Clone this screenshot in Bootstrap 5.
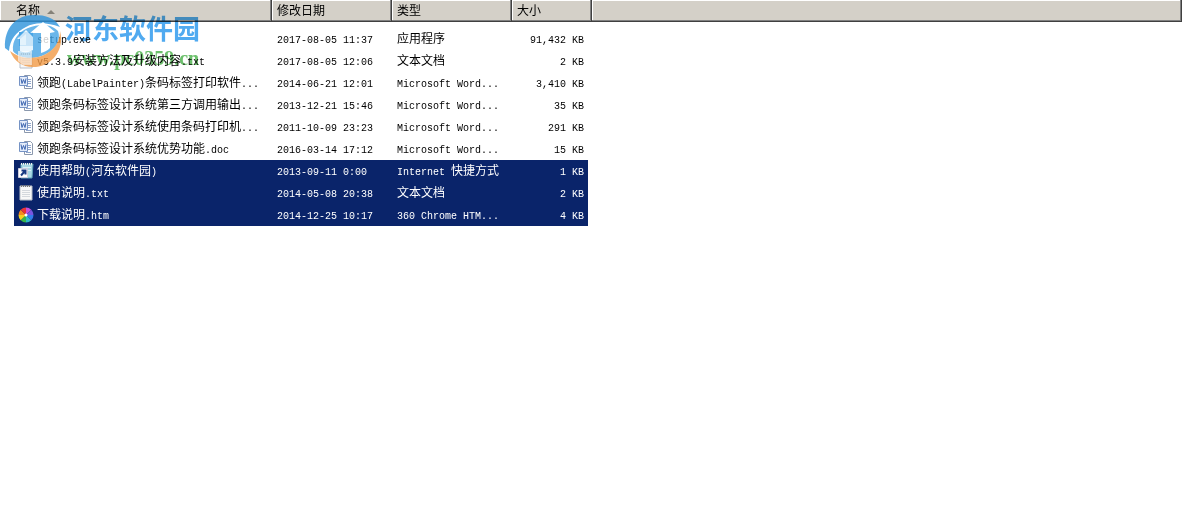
<!DOCTYPE html>
<html lang="zh-CN">
<head>
<meta charset="utf-8">
<meta name="viewport" content="width=device-width, initial-scale=1">
<title>文件列表</title>
<link rel="stylesheet" href="https://cdn.jsdelivr.net/npm/bootstrap@5.3.0/dist/css/bootstrap.min.css">
<style>
body{background:#fff;color:#000;font:12px/20px "Liberation Mono","Noto Sans CJK SC",monospace}
.files{table-layout:fixed;border-collapse:separate;border-spacing:0}
.c-name{width:272px}.c-mid{width:120px}.c-size{width:80px}
.files th{height:22px;padding:2px 0 0 5px;font-weight:400;background:#d4d0c8;white-space:nowrap;
 box-shadow:inset -1px -1px #404040,inset -2px -2px #808080,inset 1px 1px #fff}
.files th:first-child{padding-left:16px}
.files tbody::before{content:"";display:block;height:6px}
.files td{height:22px;padding:2px 0 0 5px;white-space:nowrap;border:0 solid transparent;background-clip:padding-box}
.files td:first-child{border-left-width:14px;padding:0 0 0 4px}
.files td:nth-child(4){border-right-width:4px;padding-right:4px;text-align:right}
.files .picked td:not(:last-child){background-color:#0a246a;color:#fff}
.entry{height:22px}
.entry>span{padding-top:2px}
.lat{font-size:10px;line-height:10px;white-space:pre}
.ico{width:16px;height:16px;flex:none;margin-right:3px}
.sort{width:8px;height:4px}
.mark-logo{left:4px;top:14px;width:58px;height:54px;opacity:.8}
.mark-text{left:65px;top:13px;mix-blend-mode:multiply}
.mark-name{font:700 27px/30px "Noto Sans CJK SC",sans-serif;color:#50aaf0}
.mark-url{padding:2px 0 0 2px;font:700 20px/26px "Liberation Serif",serif;color:#6cc06c}
</style>
</head>
<body>
<svg class="d-none" xmlns="http://www.w3.org/2000/svg">
<symbol id="doc" viewBox="0 0 16 16"><path d="M6.500 .5h6l2 2v11h-8z" fill="#fff" stroke="#8b98ad"/><path d="M10 4.500h3M10 6.500h3M10 8.500h3M8 11.500h5" stroke="#8fa5cc"/><path d="M1.500 1.500h8v9h-8z" fill="#e4ecfa" stroke="#7593c5"/><path d="M3 3.500l1 5 1.500-4 1.500 4 1-5" fill="none" stroke="#3c65b0"/></symbol>
<symbol id="txt" viewBox="0 0 16 16"><path d="M2 1h12v14H2z" fill="#f8f8f8" stroke="#b9bfc8"/><path d="M3 1h10" stroke="#777" stroke-width="2" stroke-dasharray="1 1"/><path d="M4 5.500h8M4 7.500h8M4 9.500h8M4 11.500h8" stroke="#d4d8dd"/></symbol>
<symbol id="link" viewBox="0 0 16 16"><path d="M3 1h12l-1 14H3z" fill="#a9d8e4" stroke="#5d9fb5"/><path d="M3 1h12" stroke="#eee" stroke-width="2" stroke-dasharray="1 1"/><path d="M5 4.500h8M10 7.500h3" stroke="#d8f2f6"/><path d="M.500 5.500h9v9h-9z" fill="#fff" stroke="#ccd"/><path d="M3 12.500L6.500 8.500M3.500 7.500h4v4" fill="none" stroke="#193a83" stroke-width="2"/></symbol>
<symbol id="wheel" viewBox="-8 -8 16 16"><path d="M0 0V-7.500A7.500 7.500 0 0 1 5.300-5.300z" fill="#c84fd8"/><path d="M0 0L5.300-5.300A7.500 7.500 0 0 1 7.500 0z" fill="#7a55e0"/><path d="M0 0H7.500A7.500 7.500 0 0 1 5.300 5.300z" fill="#347bea"/><path d="M0 0L5.300 5.300A7.500 7.500 0 0 1 0 7.500z" fill="#30b8c8"/><path d="M0 0V7.500A7.500 7.500 0 0 1-5.300 5.300z" fill="#35b54a"/><path d="M0 0L-5.300 5.300A7.500 7.500 0 0 1-7.500 0z" fill="#f2d21f"/><path d="M0 0H-7.500A7.500 7.500 0 0 1-5.300-5.300z" fill="#f58a20"/><path d="M0 0L-5.300-5.300A7.500 7.500 0 0 1 0-7.500z" fill="#ea3434"/><circle r="1.500" fill="#fff"/></symbol>
<symbol id="exe" viewBox="0 0 16 16"><path d="M1 1h14v14H1z" fill="#58a9e6"/><path d="M2 8l6-5v11H2z" fill="#d8effc"/></symbol>
</svg>
<main class="position-relative">
<table class="files w-100">
<colgroup><col class="c-name"><col class="c-mid"><col class="c-mid"><col class="c-size"><col></colgroup>
<thead><tr><th scope="col">名称 <svg class="sort" viewBox="0 0 8 4"><path d="M0 4l4-4 4 4z" fill="#858279"/></svg></th><th scope="col">修改日期</th><th scope="col">类型</th><th scope="col">大小</th><th></th></tr></thead>
<tbody>
<tr><td><div class="entry d-flex align-items-center"><svg class="ico"><use href="#exe"/></svg><span><span class="lat">setup.exe</span></span></div></td><td><span class="lat">2017-08-05 11:37</span></td><td>应用程序</td><td><span class="lat">91,432 KB</span></td><td></td></tr>
<tr><td><div class="entry d-flex align-items-center"><svg class="ico"><use href="#txt"/></svg><span><span class="lat">v5.3.9</span>安装方法及升级内容<span class="lat">.txt</span></span></div></td><td><span class="lat">2017-08-05 12:06</span></td><td>文本文档</td><td><span class="lat">2 KB</span></td><td></td></tr>
<tr><td><div class="entry d-flex align-items-center"><svg class="ico"><use href="#doc"/></svg><span>领跑<span class="lat">(LabelPainter)</span>条码标签打印软件<span class="lat">...</span></span></div></td><td><span class="lat">2014-06-21 12:01</span></td><td><span class="lat">Microsoft Word...</span></td><td><span class="lat">3,410 KB</span></td><td></td></tr>
<tr><td><div class="entry d-flex align-items-center"><svg class="ico"><use href="#doc"/></svg><span>领跑条码标签设计系统第三方调用输出<span class="lat">...</span></span></div></td><td><span class="lat">2013-12-21 15:46</span></td><td><span class="lat">Microsoft Word...</span></td><td><span class="lat">35 KB</span></td><td></td></tr>
<tr><td><div class="entry d-flex align-items-center"><svg class="ico"><use href="#doc"/></svg><span>领跑条码标签设计系统使用条码打印机<span class="lat">...</span></span></div></td><td><span class="lat">2011-10-09 23:23</span></td><td><span class="lat">Microsoft Word...</span></td><td><span class="lat">291 KB</span></td><td></td></tr>
<tr><td><div class="entry d-flex align-items-center"><svg class="ico"><use href="#doc"/></svg><span>领跑条码标签设计系统优势功能<span class="lat">.doc</span></span></div></td><td><span class="lat">2016-03-14 17:12</span></td><td><span class="lat">Microsoft Word...</span></td><td><span class="lat">15 KB</span></td><td></td></tr>
<tr class="picked"><td><div class="entry d-flex align-items-center"><svg class="ico"><use href="#link"/></svg><span>使用帮助<span class="lat">(</span>河东软件园<span class="lat">)</span></span></div></td><td><span class="lat">2013-09-11 0:00</span></td><td><span class="lat">Internet </span>快捷方式</td><td><span class="lat">1 KB</span></td><td></td></tr>
<tr class="picked"><td><div class="entry d-flex align-items-center"><svg class="ico"><use href="#txt"/></svg><span>使用说明<span class="lat">.txt</span></span></div></td><td><span class="lat">2014-05-08 20:38</span></td><td>文本文档</td><td><span class="lat">2 KB</span></td><td></td></tr>
<tr class="picked"><td><div class="entry d-flex align-items-center"><svg class="ico"><use href="#wheel"/></svg><span>下载说明<span class="lat">.htm</span></span></div></td><td><span class="lat">2014-12-25 10:17</span></td><td><span class="lat">360 Chrome HTM...</span></td><td><span class="lat">4 KB</span></td><td></td></tr>
</tbody>
</table>
<svg class="mark-logo position-absolute" viewBox="0 0 58 54"><path d="M1 34C0 14 12 1 30 1c12 0 21 3 26 12C42 8 31 8 22 13 12 18 6 25 5 37z" fill="#2d93dc"/><path d="M9 37C8 26 14 18 24 14 36 9 48 10 54 17c3 8-1 17-10 22-12 7-28 7-35-2z" fill="#45a5e6"/><path d="M56 17c5 17-7 36-27 36C18 53 10 47 6 37c10 8 25 9 36 3 9-5 14-13 14-23z" fill="#f29a45"/><path d="M13 25l9-9 7 7v13c-5 3-9 3-13 1V25z" fill="#e6f4fd"/><path d="M26 19L39 8l12 10-5 1v15c-3 3-6 4-9 5V19z" fill="#fff"/><path d="M14 37h14v14H19l-5-4z" fill="#fff" opacity=".6"/></svg>
<div class="mark-text position-absolute"><div class="mark-name">河东软件园</div><div class="mark-url">www.pc0359.cn</div></div>
</main>
<script src="https://cdn.jsdelivr.net/npm/bootstrap@5.3.0/dist/js/bootstrap.bundle.min.js"></script>
</body>
</html>
